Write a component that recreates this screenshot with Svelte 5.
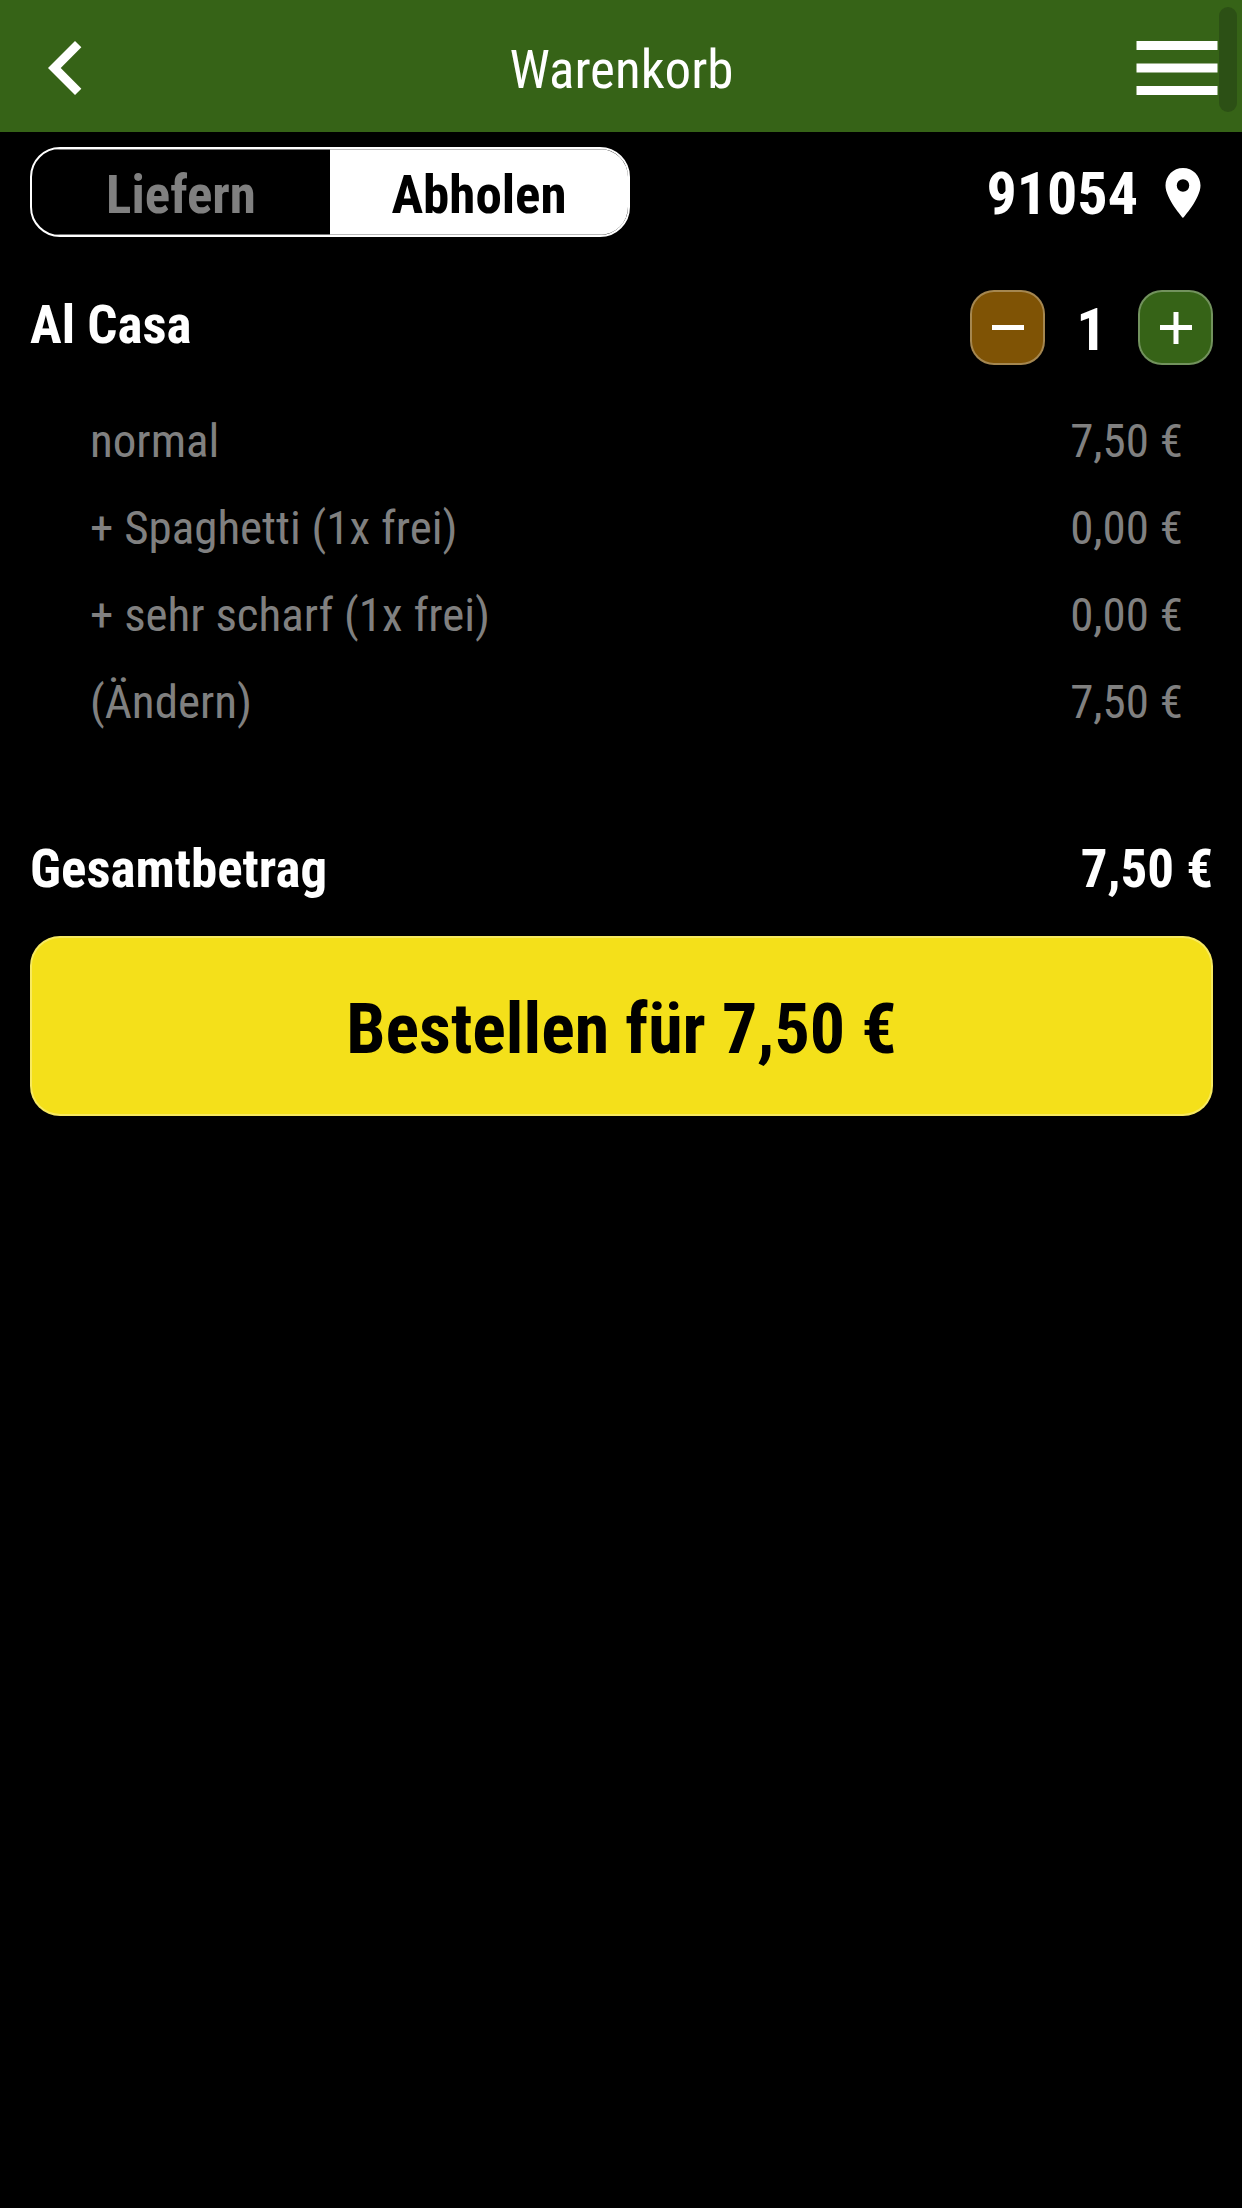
<script lang="ts">
  /**
   * Cart page
   * Delivery mode, cart items and order button
   */
  type Mode = 'deliver' | 'pickup';

  interface Position {
    label: string;
    price: number;
  }

  const zip = '91054';
  const item = {
    name: 'Al Casa',
    positions: [
      { label: 'normal', price: 7.5 },
      { label: '+ Spaghetti (1x frei)', price: 0 },
      { label: '+ sehr scharf (1x frei)', price: 0 },
    ] as Position[],
  };

  let mode: Mode = $state('pickup');
  let quantity = $state(1);

  const unitPrice = item.positions.reduce((sum, p) => sum + p.price, 0);
  let total = $derived(unitPrice * quantity);

  function formatPrice(value: number): string {
    return value.toFixed(2).replace('.', ',') + ' €';
  }

  function changeQuantity(step: number) {
    quantity = Math.max(0, quantity + step);
  }
</script>

<div class="page">
  <header class="topbar">
    <button class="icon-button" aria-label="Zurück">
      <svg viewBox="0 0 24 24"><path d="M15.41 7.41L14 6l-6 6 6 6 1.41-1.41L10.83 12z" /></svg>
    </button>
    <h1>Warenkorb</h1>
    <button class="icon-button" aria-label="Menü">
      <svg viewBox="0 0 24 24"><path d="M3 18h18v-2H3v2zm0-5h18v-2H3v2zm0-7v2h18V6H3z" /></svg>
    </button>
    <div class="scroll-thumb"></div>
  </header>

  <main>
    <div class="options">
      <div class="toggle">
        <button
          class:active={mode === 'deliver'}
          aria-pressed={mode === 'deliver'}
          onclick={() => (mode = 'deliver')}>Liefern</button>
        <button
          class:active={mode === 'pickup'}
          aria-pressed={mode === 'pickup'}
          onclick={() => (mode = 'pickup')}>Abholen</button>
      </div>
      <button class="location">
        <span>{zip}</span>
        <svg viewBox="0 0 24 24">
          <path d="M12 2C8.13 2 5 5.13 5 9c0 5.25 7 13 7 13s7-7.75 7-13c0-3.87-3.13-7-7-7zm0 9.5a2.5 2.5 0 0 1 0-5 2.5 2.5 0 0 1 0 5z" />
        </svg>
      </button>
    </div>

    <!-- Cart item -->
    <section class="item">
      <div class="item-head">
        <h2>{item.name}</h2>
        <div class="stepper">
          <button class="minus" aria-label="Weniger" onclick={() => changeQuantity(-1)}>
            <svg viewBox="0 0 32 32"><path d="M0 13h32v5H0z" /></svg>
          </button>
          <span class="quantity">{quantity}</span>
          <button class="plus" aria-label="Mehr" onclick={() => changeQuantity(1)}>
            <svg viewBox="0 0 32 32"><path d="M0 13h13.5V0h5v13H32v5H18.5v14h-5V18H0z" /></svg>
          </button>
        </div>
      </div>

      <ul class="positions">
        {#each item.positions as position}
          <li>
            <span>{position.label}</span>
            <span>{formatPrice(position.price)}</span>
          </li>
        {/each}
        <li>
          <button class="edit">(Ändern)</button>
          <span>{formatPrice(total)}</span>
        </li>
      </ul>
    </section>

    <!-- Total -->
    <div class="total">
      <span>Gesamtbetrag</span>
      <span>{formatPrice(total)}</span>
    </div>
    <button class="order">Bestellen für {formatPrice(total)}</button>
  </main>
</div>

<style>
  :global(body) {
    background: #000;
  }

  .page {
    min-height: 100vh;
    background: #000;
    color: #fff;
    font-family: 'Roboto Condensed', Roboto, sans-serif;
    font-size: 53px;
  }

  button {
    margin: 0;
    padding: 0;
    border: none;
    background: none;
    color: inherit;
    font: inherit;
    cursor: pointer;
  }

  svg {
    display: block;
    fill: currentColor;
  }

  .topbar {
    position: relative;
    display: flex;
    align-items: center;
    justify-content: space-between;
    padding: 14px 11px 10px 12px;
    background: #366317;
  }

  .topbar h1 {
    margin: 0;
    padding-top: 4px;
    font-size: 53px;
    font-weight: 400;
    line-height: 64px;
  }

  .icon-button svg {
    width: 108px;
    height: 108px;
  }

  .scroll-thumb {
    position: absolute;
    top: 7px;
    right: 5px;
    width: 18px;
    height: 105px;
    border-radius: 9px;
    background: #2c5015;
  }

  main {
    padding: 15px 29px 0 30px;
  }

  .options {
    display: flex;
    align-items: center;
    justify-content: space-between;
  }

  .toggle {
    display: flex;
    box-sizing: border-box;
    width: 600px;
    height: 90px;
    border: 2px solid #fff;
    border-radius: 30px;
    overflow: hidden;
  }

  .toggle button {
    flex: 1;
    padding-top: 6px;
    color: #808080;
    font-weight: 700;
    box-shadow: inset 0 1px #777, inset 0 -1px #777;
  }

  .toggle button.active {
    background: #fff;
    color: #000;
    box-shadow: inset 0 1px #bbb, inset 0 -1px #bbb;
  }

  .location {
    display: flex;
    align-items: center;
    gap: 15px;
    padding-top: 2px;
    font-size: 60px;
    font-weight: 700;
  }

  .location svg {
    width: 60px;
    height: 60px;
  }

  .item-head {
    display: flex;
    align-items: center;
    justify-content: space-between;
    margin-top: 53px;
  }

  .item-head h2 {
    margin: 0;
    padding-bottom: 4px;
    font-size: 53px;
    font-weight: 700;
    line-height: 71px;
  }

  .stepper {
    display: flex;
    align-items: center;
  }

  .stepper button {
    display: flex;
    align-items: center;
    justify-content: center;
    box-sizing: border-box;
    width: 75px;
    height: 75px;
    border: 2px solid rgba(255, 255, 255, 0.3);
    border-radius: 24px;
  }

  .stepper svg {
    width: 32px;
    height: 32px;
  }

  .minus {
    background: #7f5305;
  }

  .plus {
    background: #366317;
  }

  .quantity {
    width: 93px;
    padding-top: 4px;
    font-size: 60px;
    font-weight: 700;
    line-height: 71px;
    text-align: center;
  }

  .positions {
    margin: 32px 0 0;
    padding: 0 30px 0 60px;
    list-style: none;
    color: #808080;
    font-size: 47px;
    line-height: 87px;
  }

  .positions li {
    display: flex;
    justify-content: space-between;
  }

  .total {
    display: flex;
    justify-content: space-between;
    margin-top: 88px;
    font-weight: 700;
    line-height: 72px;
  }

  .order {
    display: block;
    box-sizing: border-box;
    width: 100%;
    height: 180px;
    margin-top: 31px;
    padding-top: 6px;
    border: 2px solid rgba(255, 255, 255, 0.3);
    border-radius: 30px;
    background: #f4e01a;
    color: #000;
    font-size: 70px;
    font-weight: 700;
  }
</style>
